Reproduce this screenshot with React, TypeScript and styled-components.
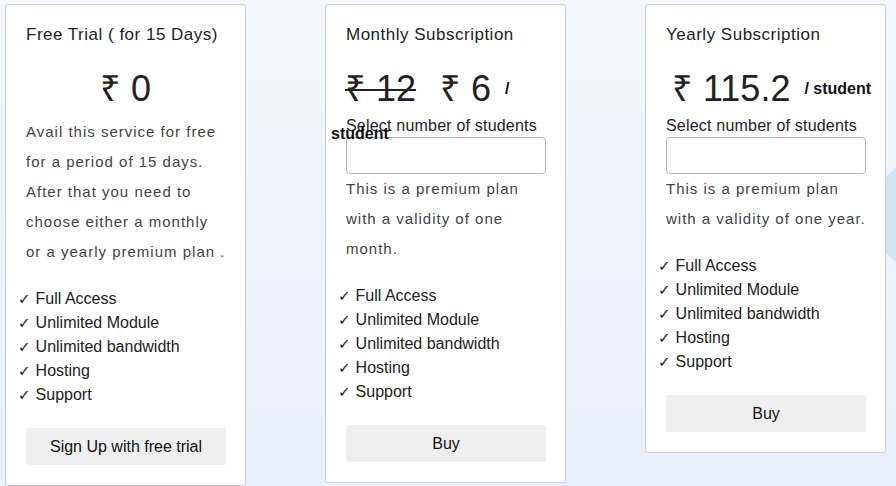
import React from "react";
import styled, { createGlobalStyle } from "styled-components";

const Global = createGlobalStyle`
  html, body { margin: 0; padding: 0; }
  body {
    width: 896px;
    height: 486px;
    overflow: hidden;
    font-family: "Liberation Sans", Arial, sans-serif;
    background: linear-gradient(180deg, #f4f8fe 0%, #ecf2fb 60%, #e8f0fb 100%);
  }
`;

const Page = styled.div`
  position: relative;
  width: 896px;
  height: 486px;
  overflow: hidden;
`;

const Bubble = styled.div`
  position: absolute;
  left: 872px;
  top: 157px;
  width: 116px;
  height: 116px;
  border-radius: 50%;
  background: #cfe3f8;
`;

const Row = styled.div`
  position: relative;
  display: flex;
  align-items: flex-start;
  gap: 79px;
  padding: 4px 0 0 5px;
`;

const Card = styled.div`
  position: relative;
  box-sizing: border-box;
  width: 241px;
  background: #fff;
  border: 1px solid #cfcfcf;
  border-radius: 3px;
  padding: 19px 20px 20px 20px;
  display: flex;
  flex-direction: column;
`;

const Title = styled.div`
  font-size: 17px;
  line-height: 22px;
  letter-spacing: 0.5px;
  color: #222;
`;

const PriceRow = styled.div<{ $center?: boolean; $indent?: number }>`
  position: relative;
  margin-top: 23px;
  display: flex;
  align-items: center;
  justify-content: ${(p) => (p.$center ? "center" : "flex-start")};
  padding-left: ${(p) => p.$indent ?? 0}px;
  height: 40px;
  white-space: nowrap;
`;

const Amount = styled.span<{ $old?: boolean }>`
  font-size: 36px;
  line-height: 40px;
  color: #222;
  text-decoration: ${(p) => (p.$old ? "line-through" : "none")};
  text-decoration-thickness: 2px;
  margin-right: ${(p) => (p.$old ? "24px" : "0")};
  margin-left: ${(p) => (p.$old ? "-1px" : "0")};
`;

const Per = styled.span`
  font-size: 16px;
  font-weight: bold;
  color: #111;
  margin-left: 14px;
`;

const Wrapped = styled.span<{ $top: number }>`
  position: absolute;
  left: -15px;
  top: ${(p) => p.$top}px;
  font-size: 16px;
  font-weight: bold;
  color: #111;
`;

const Desc = styled.p<{ $gap?: number }>`
  margin: ${(p) => p.$gap ?? 0}px -2px 0 0;
  font-size: 15px;
  line-height: 30px;
  letter-spacing: 1px;
  color: #444;
`;

const Label = styled.div`
  margin-top: 8px;
  font-size: 16px;
  line-height: 18px;
  letter-spacing: 0.2px;
  color: #222;
`;

const Input = styled.input`
  box-sizing: border-box;
  width: 200px;
  height: 37px;
  margin: 2px 0 0 0;
  border: 1px solid #b5b5b5;
  border-radius: 4px;
  background: #fff;
`;

const List = styled.ul`
  list-style: none;
  margin: 20px 0 0 -8px;
  padding: 0;
`;

const Item = styled.li`
  display: flex;
  align-items: center;
  height: 24px;
  font-size: 16px;
  line-height: 24px;
  color: #222;
`;

const Check = styled.span`
  font-family: "DejaVu Sans", sans-serif;
  font-size: 15px;
  line-height: 1;
  margin-right: 5px;
`;

const Button = styled.button`
  margin-top: 21px;
  width: 200px;
  height: 37px;
  border: none;
  border-radius: 2px;
  background: #efefef;
  font-family: "Liberation Sans", Arial, sans-serif;
  font-size: 16px;
  color: #111;
`;

const features = ["Full Access", "Unlimited Module", "Unlimited bandwidth", "Hosting", "Support"];

const Features = () => (
  <List>
    {features.map((f) => (
      <Item key={f}>
        <Check>✓</Check>
        {f}
      </Item>
    ))}
  </List>
);

export default function App() {
  return (
    <Page>
      <Global />
      <Bubble />
      <Row>
        <Card>
          <Title>Free Trial ( for 15 Days)</Title>
          <PriceRow $center>
            <Amount>₹ 0</Amount>
          </PriceRow>
          <Desc $gap={8}>
            Avail this service for free for a period of 15 days. After that you need to choose either a monthly or a yearly premium plan .
          </Desc>
          <Features />
          <Button>Sign Up with free trial</Button>
        </Card>
        <Card>
          <Title>Monthly Subscription</Title>
          <PriceRow>
            <Amount $old>₹ 12</Amount>
            <Amount>₹ 6</Amount>
            <Per>/</Per>
            <Wrapped $top={56}>student</Wrapped>
          </PriceRow>
          <Label>Select number of students</Label>
          <Input type="number" />
          <Desc>This is a premium plan with a validity of one month.</Desc>
          <Features />
          <Button>Buy</Button>
        </Card>
        <Card>
          <Title>Yearly Subscription</Title>
          <PriceRow $indent={6}>
            <Amount>₹ 115.2</Amount>
            <Per>/ student</Per>
          </PriceRow>
          <Label>Select number of students</Label>
          <Input type="number" />
          <Desc>This is a premium plan with a validity of one year.</Desc>
          <Features />
          <Button>Buy</Button>
        </Card>
      </Row>
    </Page>
  );
}
